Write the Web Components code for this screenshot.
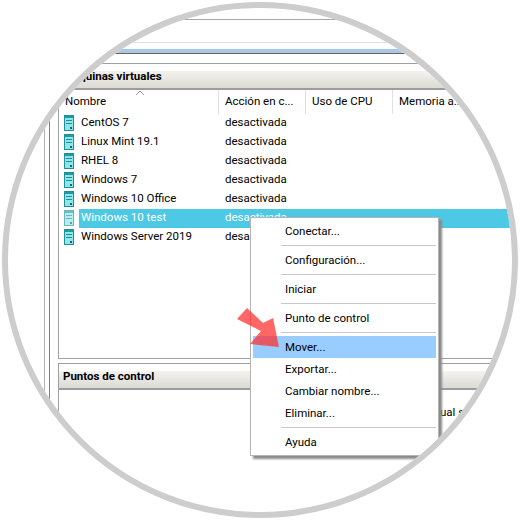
<!DOCTYPE html>
<html lang="es">
<head>
<meta charset="utf-8">
<title>Máquinas virtuales</title>
<style>
    html, body { margin: 0; padding: 0; background: #fff; }
    body { font-family: Roboto, "Noto Sans", sans-serif; font-size: 11.5px; color: #000; }
</style>
</head>
<body>
<hv-lens>
    <hv-toolbar></hv-toolbar>
    <hv-split>
        <hv-panel title="Máquinas virtuales" style="height:296px">
            <vm-head></vm-head>
            <vm-row name="CentOS 7"></vm-row>
            <vm-row name="Linux Mint 19.1"></vm-row>
            <vm-row name="RHEL 8"></vm-row>
            <vm-row name="Windows 7"></vm-row>
            <vm-row name="Windows 10 Office"></vm-row>
            <vm-row name="Windows 10 test" selected></vm-row>
            <vm-row name="Windows Server 2019"></vm-row>
        </hv-panel>
        <hv-panel title="Puntos de control" style="height:170px">
            <hv-empty>ual s</hv-empty>
        </hv-panel>
    </hv-split>
    <ctx-menu>
        <ctx-item>Conectar...</ctx-item>
        <ctx-sep></ctx-sep>
        <ctx-item>Configuración...</ctx-item>
        <ctx-sep></ctx-sep>
        <ctx-item>Iniciar</ctx-item>
        <ctx-sep></ctx-sep>
        <ctx-item>Punto de control</ctx-item>
        <ctx-sep></ctx-sep>
        <ctx-item active>Mover...</ctx-item>
        <ctx-item>Exportar...</ctx-item>
        <ctx-item>Cambiar nombre...</ctx-item>
        <ctx-item>Eliminar...</ctx-item>
        <ctx-sep></ctx-sep>
        <ctx-item>Ayuda</ctx-item>
    </ctx-menu>
    <hv-arrow></hv-arrow>
</hv-lens>

<script>
// small helper, every element here is just a shadow root with fixed markup
class Base extends HTMLElement {
    constructor() {
        super();
        this.attachShadow({ mode: 'open' });
    }
    connectedCallback() {
        this.shadowRoot.innerHTML = this.template();
    }
}

// the round magnifier everything is cut by
class HvLens extends Base {
    template() {
        return `
            <style>
                :host {
                    display: block;
                    position: relative;
                    box-sizing: border-box;
                    width: 516px;
                    height: 516px;
                    margin: 2px;
                    border: 6px solid #cdcdcd;
                    border-radius: 50%;
                    overflow: hidden;
                    background: #fff;
                }
            </style>
            <slot></slot>
        `;
    }
}

// stripes of the hyper-v window above the panels
class HvToolbar extends Base {
    template() {
        return `
            <style>
                :host { display: block; height: 47px; }
                .a { height: 11px; border-bottom: 1px solid #a8a8a8; }
                .b { height: 22px; border-bottom: 1px solid #e2e2e2; }
                .c { height: 6px; }
                .d { height: 4px; background: #a9c8e6; }
                .e { height: 1px; background: #666; }
            </style>
            <div class="a"></div>
            <div class="b"></div>
            <div class="c"></div>
            <div class="d"></div>
            <div class="e"></div>
        `;
    }
}

// left gutter lines + the stacked panels
class HvSplit extends Base {
    template() {
        return `
            <style>
                :host {
                    display: flex;
                    flex-direction: column;
                    gap: 4px;
                    padding-left: 50px;
                    padding-top: 8px;
                    position: relative;
                }
                .gutter {
                    position: absolute;
                    left: 36px;
                    top: 0;
                    width: 4px;
                    height: 400px;
                    border-left: 1px solid #b0b0b0;
                    border-right: 1px solid #808080;
                }
            </style>
            <div class="gutter"></div>
            <slot></slot>
        `;
    }
}

class HvPanel extends Base {
    template() {
        return `
            <style>
                :host {
                    display: block;
                    box-sizing: border-box;
                    border: 1px solid #a0a0a0;
                    border-right: 0;
                    overflow: hidden;
                }
                .title {
                    box-sizing: border-box;
                    height: 19px;
                    margin-top: 7px;
                    padding-left: 4px;
                    line-height: 10px;
                    font-weight: 700;
                    background: linear-gradient(#f3f2ee, #dcdad3);
                    border-bottom: 2px solid #9c9c9c;
                }
            </style>
            <div class="title">${this.getAttribute('title')}</div>
            <slot></slot>
        `;
    }
}

class VmHead extends Base {
    template() {
        return `
            <style>
                :host {
                    display: grid;
                    grid-template-columns: 160px 87px 87px 1fr;
                    height: 24px;
                    position: relative;
                }
                div {
                    padding-left: 6px;
                    line-height: 22px;
                    border-right: 1px solid #e0e0e0;
                    white-space: nowrap;
                    overflow: hidden;
                }
                svg { position: absolute; left: 76px; top: 0; }
            </style>
            <div>Nombre</div>
            <div>Acción en c...</div>
            <div>Uso de CPU</div>
            <div>Memoria a...</div>
            <svg width="10" height="6" viewBox="0 0 10 6"><path d="M1 5 L5 1 L9 5" fill="none" stroke="#9a9a9a"/></svg>
        `;
    }
}

class VmRow extends Base {
    template() {
        const on = this.hasAttribute('selected');
        return `
            <style>
                :host { display: flex; height: 19px; line-height: 16px; }
                .ico { width: 20px; flex: none; padding: 1px 0 0 5px; box-sizing: border-box; opacity: ${on ? 0.65 : 1}; }
                .cells {
                    flex: 1;
                    display: grid;
                    grid-template-columns: 140px 1fr;
                    background: ${on ? '#4dc9e6' : 'transparent'};
                    color: ${on ? '#fff' : '#000'};
                }
                .cells div { white-space: nowrap; }
                .name { padding-left: 2px; }
                .state { padding-left: 6px; }
            </style>
            <div class="ico">
                <svg width="10" height="16" viewBox="0 0 10 16" style="display:block">
                    <rect x="0.5" y="0.5" width="9" height="15" fill="#8fe6ea" stroke="#1f8f98"/>
                    <rect x="1" y="1" width="8" height="2" fill="#1f9aa3"/>
                    <path d="M2 5.5 H8 M2 8.5 H8" stroke="#1f8f98"/>
                    <rect x="6" y="12" width="2" height="2" fill="#136a72"/>
                </svg>
            </div>
            <div class="cells">
                <div class="name">${this.getAttribute('name')}</div>
                <div class="state">desactivada</div>
            </div>
        `;
    }
}

class HvEmpty extends Base {
    template() {
        return `
            <style>
                :host {
                    display: block;
                    padding: 15px 0 0 381px;
                    white-space: nowrap;
                }
            </style>
            <slot></slot>
        `;
    }
}

class CtxMenu extends Base {
    template() {
        return `
            <style>
                :host {
                    position: absolute;
                    left: 242px;
                    top: 209px;
                    box-sizing: border-box;
                    width: 189px;
                    padding: 2px;
                    background: #fff;
                    border: 1px solid #b4b4b4;
                    box-shadow: 3px 3px 2px #8a8a8a;
                    display: flex;
                    flex-direction: column;
                }
            </style>
            <slot></slot>
        `;
    }
}

class CtxItem extends Base {
    template() {
        const on = this.hasAttribute('active');
        return `
            <style>
                :host {
                    display: block;
                    height: 22px;
                    padding-left: 32px;
                    line-height: 23px;
                    background: ${on ? '#99ccff' : 'transparent'};
                }
            </style>
            <slot></slot>
        `;
    }
}

class CtxSep extends Base {
    template() {
        return `
            <style>
                :host {
                    display: block;
                    height: 1px;
                    margin: 3px 0 3px 28px;
                    background: #c8c8c8;
                }
            </style>
        `;
    }
}

// red pointer over the menu
class HvArrow extends Base {
    template() {
        return `
            <style>
                :host { position: absolute; left: 228px; top: 298px; width: 46px; height: 44px; }
                svg { display: block; }
            </style>
            <svg width="46" height="44" viewBox="0 0 46 44">
                <path d="M1 13 L11 2 L27 17 L37 12 L43 41 L14 38 L25 25 Z" fill="#f33" fill-opacity=".75"/>
            </svg>
        `;
    }
}

customElements.define('hv-lens', HvLens);
customElements.define('hv-toolbar', HvToolbar);
customElements.define('hv-split', HvSplit);
customElements.define('hv-panel', HvPanel);
customElements.define('vm-head', VmHead);
customElements.define('vm-row', VmRow);
customElements.define('hv-empty', HvEmpty);
customElements.define('ctx-menu', CtxMenu);
customElements.define('ctx-item', CtxItem);
customElements.define('ctx-sep', CtxSep);
customElements.define('hv-arrow', HvArrow);
</script>
</body>
</html>
